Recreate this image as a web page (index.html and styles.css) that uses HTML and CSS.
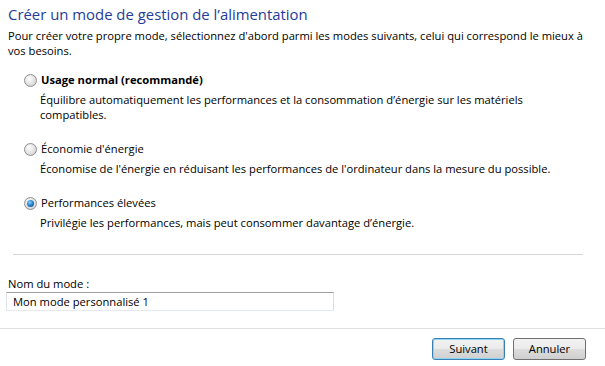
FILE: index.html
```html
<!DOCTYPE html>
<html lang="fr">
<head>
<meta charset="utf-8">
<link rel="stylesheet" href="styles.css">
</head>
<body>
<div class="page">
  <h1 class="title">Créer un mode de gestion de l’alimentation</h1>
  <p class="intro">Pour créer votre propre mode, sélectionnez d'abord parmi les modes suivants, celui qui correspond le mieux à vos besoins.</p>
  <div class="options">
    <div class="option">
      <div class="opt-head"><span class="radio"></span><span class="label bold">Usage normal (recommandé)</span></div>
      <div class="desc">Équilibre automatiquement les performances et la consommation d’énergie sur les matériels compatibles.</div>
    </div>
    <div class="option">
      <div class="opt-head"><span class="radio"></span><span class="label">Économie d'énergie</span></div>
      <div class="desc">Économise de l'énergie en réduisant les performances de l'ordinateur dans la mesure du possible.</div>
    </div>
    <div class="option">
      <div class="opt-head"><span class="radio checked"></span><span class="label">Performances élevées</span></div>
      <div class="desc">Privilégie les performances, mais peut consommer davantage d’énergie.</div>
    </div>
  </div>
  <div class="sep"></div>
  <div class="name-block">
    <div class="name-label">Nom du mode :</div>
    <div class="textbox">Mon mode personnalisé 1</div>
  </div>
</div>
<div class="footer">
  <span class="btn default">Suivant</span>
  <span class="btn">Annuler</span>
</div>
</body>
</html>
```
FILE: styles.css
```css
html, body {
  margin: 0;
  padding: 0;
  background: #ffffff;
}
body {
  width: 605px;
  height: 366px;
  overflow: hidden;
  font-family: "Open Sans", "Noto Sans", sans-serif;
  font-size: 11.2px;
  color: #000;
}
.page {
  padding: 4px 0 0 8px;
  width: 587px;
}
.title {
  margin: 0;
  font-weight: normal;
  font-size: 14.9px;
  line-height: 20px;
  color: #1f3c9a;
}
.intro {
  margin: 4px 0 0 0;
  line-height: 15px;
  width: 590px;
}
.options {
  margin-top: 14px;
  padding-left: 16px;
  display: flex;
  flex-direction: column;
  gap: 19px;
}
.option {
  display: flex;
  flex-direction: column;
}
.opt-head {
  display: flex;
  align-items: center;
  height: 16px;
}
.radio {
  width: 11px;
  height: 11px;
  border-radius: 50%;
  border: 1px solid #8e8f8f;
  background: radial-gradient(circle at 40% 35%, #ffffff 0%, #e6e6e6 45%, #c9c9c9 100%);
  margin-right: 4px;
  box-sizing: content-box;
  position: relative;
}
.radio.checked::after {
  content: "";
  position: absolute;
  left: 2px;
  top: 2px;
  width: 7px;
  height: 7px;
  border-radius: 50%;
  background: radial-gradient(circle at 40% 35%, #8fd6ff 0%, #2a86cf 45%, #0b3f7a 100%);
}
.label {
  line-height: 16px;
}
.bold {
  font-weight: bold;
}
.desc {
  margin-top: 4px;
  padding-left: 16px;
  line-height: 15px;
  width: 540px;
}
.sep {
  margin: 24px 0 0 5px;
  width: 570px;
  height: 1px;
  background: #d5d5d5;
}
.name-block {
  margin-top: 22px;
}
.name-label {
  line-height: 14px;
}
.textbox {
  margin: 1px 0 0 -2px;
  width: 320px;
  height: 17px;
  line-height: 17px;
  padding-left: 6px;
  border: 1px solid #abadb3;
  border-top-color: #a0a0a0;
  border-right-color: #dbdfe6;
  border-bottom-color: #e3e9ef;
  border-left-color: #e2e3ea;
}
.footer {
  margin-top: 17px;
  border-top: 1px solid #dfdfdf;
  display: flex;
  justify-content: flex-end;
  gap: 8px;
  padding: 9px 19px 0 0;
}
.btn {
  width: 71px;
  height: 20px;
  line-height: 20px;
  text-align: center;
  border: 1px solid #707070;
  border-radius: 3px;
  background: linear-gradient(#f2f2f2 0%, #ebebeb 50%, #dddddd 51%, #cfcfcf 100%);
}
.btn.default {
  border-color: #3c7fb1;
  box-shadow: inset 0 0 0 1px #8ed4f5;
}
```
